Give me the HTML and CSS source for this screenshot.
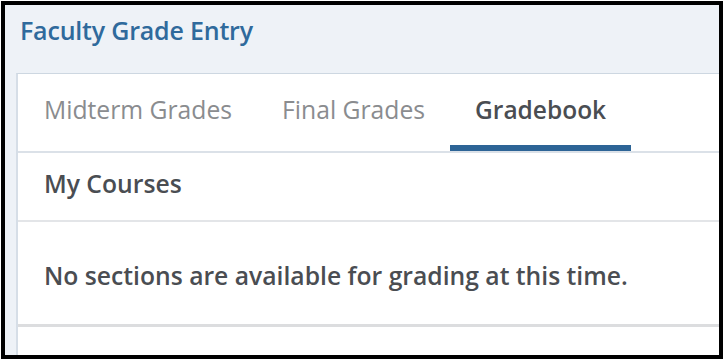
FILE: index.html
```html
<!DOCTYPE html>
<html>
<head>
<meta charset="utf-8">
<link rel="stylesheet" href="styles.css">
</head>
<body>
<div class="frame">
  <div class="header"><span class="title">Faculty Grade Entry</span></div>
  <div class="card">
    <div class="tabs">
      <div class="tab">Midterm Grades</div>
      <div class="tab">Final Grades</div>
      <div class="tab active">Gradebook</div>
    </div>
    <div class="row heading">My Courses</div>
    <div class="row message">No sections are available for grading at this time.</div>
  </div>
</div>
</body>
</html>
```
FILE: styles.css
```css
html, body {
  margin: 0;
  padding: 0;
  background: #ffffff;
}
body {
  font-family: "Open Sans", "Liberation Sans", sans-serif;
}
.frame {
  margin: 1px 5px 5px 1px;
  width: 722px;
  height: 358px;
  box-sizing: border-box;
  border: 4px solid #000;
  background: #eef2f7;
  overflow: hidden;
  display: flex;
  flex-direction: column;
}
.header {
  padding: 12px 15px 30px;
  line-height: 26px;
  height: 26px;
}
.title {
  font-size: 25px;
  font-weight: 600;
  color: #2f6a9c;
  letter-spacing: -0.2px;
}
.card {
  flex: 1;
  margin-left: 11px;
  background: #fff;
  border-left: 2px solid #d6dee7;
  border-top: 1px solid #cdd7e1;
  display: flex;
  flex-direction: column;
}
.tabs {
  display: flex;
  height: 77px;
  border-bottom: 2px solid #dbe1e8;
  padding-left: 1px;
}
.tab {
  padding: 0 25px;
  font-size: 24.7px;
  line-height: 71px;
  height: 71px;
  color: #8a8c8f;
  border-bottom: 6px solid transparent;
  white-space: nowrap;
}
.tab.active {
  font-size: 24.5px;
  color: #4a4d52;
  font-weight: 600;
  border-bottom-color: #2d6496;
}
.row {
  padding-left: 26px;
  font-size: 24.7px;
  font-weight: 600;
  color: #4a4d52;
  white-space: nowrap;
}
.heading {
  height: 67px;
  line-height: 62px;
  border-bottom: 2px solid #e3e5e8;
}
.message {
  height: 96px;
  padding-top: 6px;
  line-height: 96px;
  border-bottom: 3px solid #dcdddf;
}
```
